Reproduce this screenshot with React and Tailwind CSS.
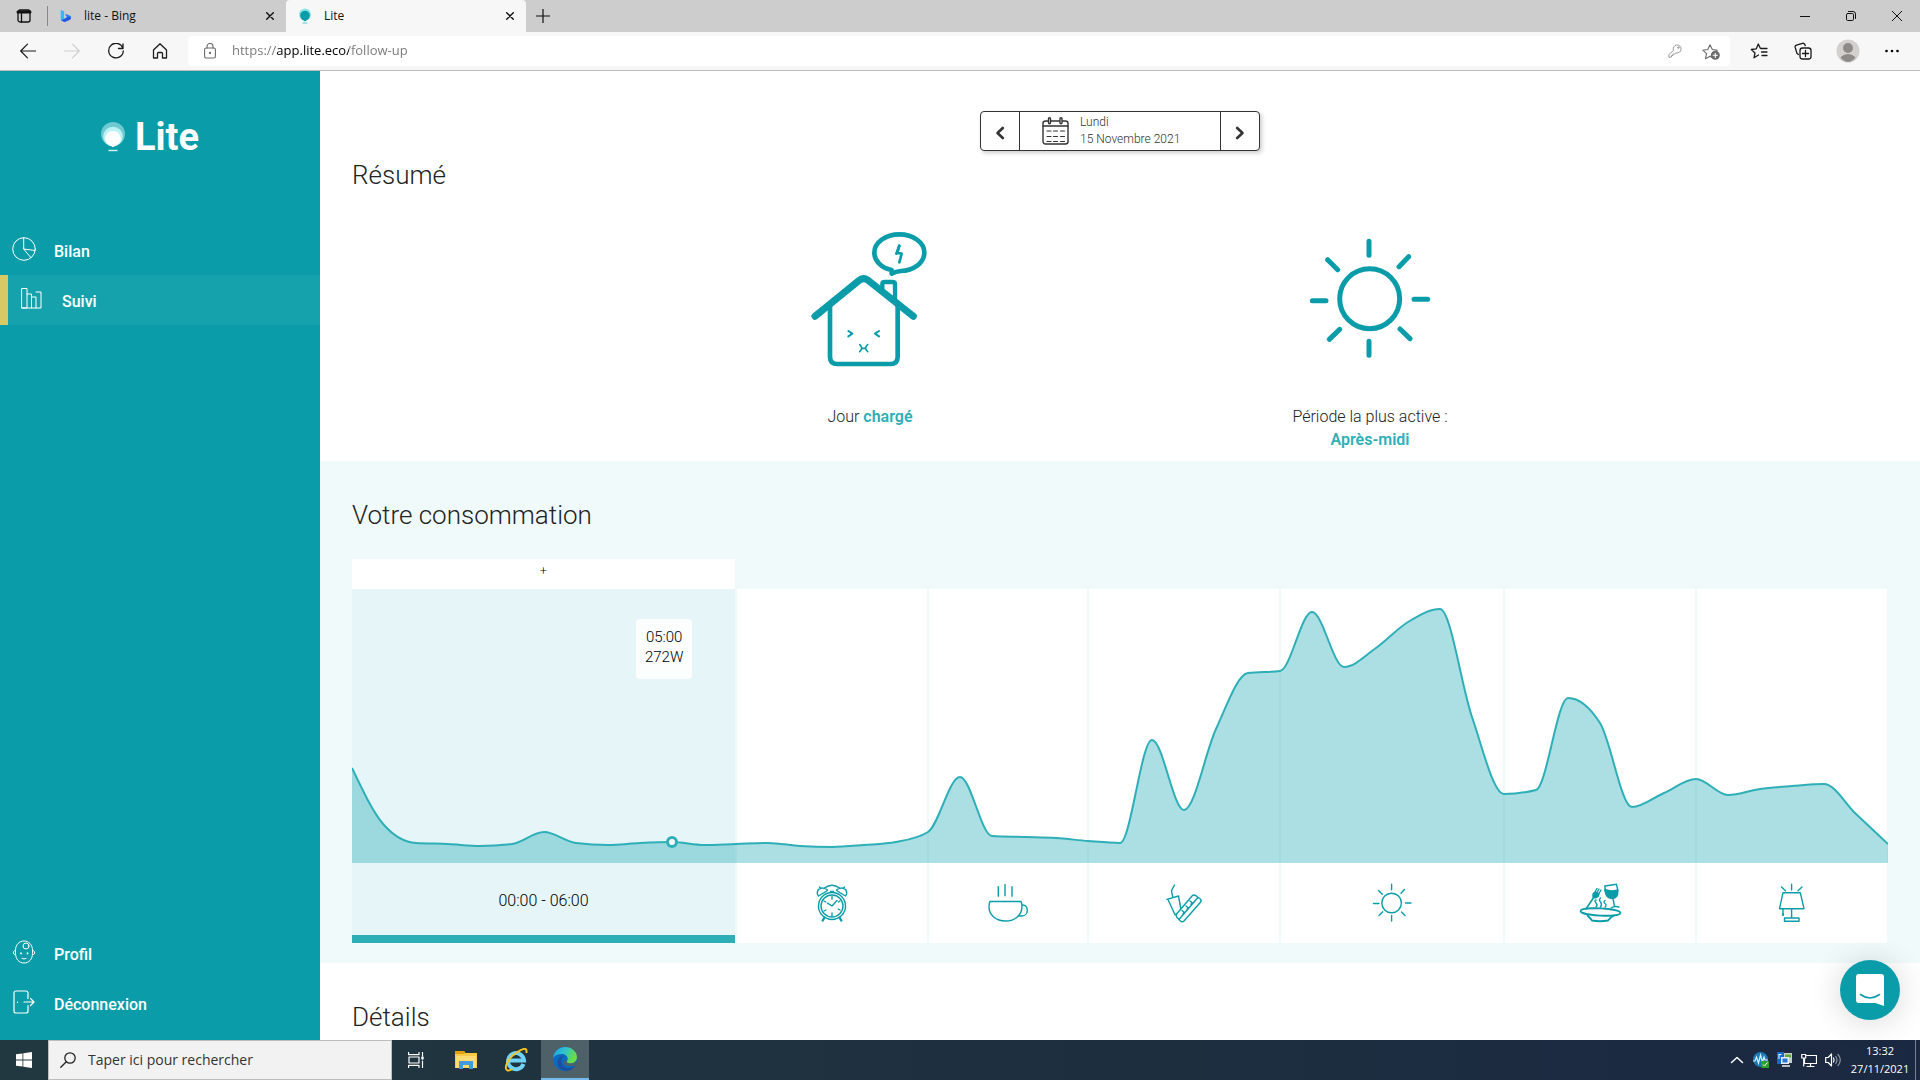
import React from "react";

const TEAL = "#0a9da9";

/* ---------- Browser chrome ---------- */

function Svg({ children, className = "h-4 w-4", box = "0 0 16 16", width = 1 }) {
  return (
    <svg viewBox={box} className={`shrink-0 ${className}`} fill="none" stroke="currentColor" strokeWidth={width} strokeLinecap="round" strokeLinejoin="round" aria-hidden="true">
      {children}
    </svg>
  );
}

function CloseGlyph() {
  return (
    <Svg className="h-2 w-2" box="0 0 8 8" width={1.4}>
      <path d="M.7.7l6.6 6.6M7.3.7L.7 7.3" />
    </Svg>
  );
}

function TabBar() {
  return (
    <div className="flex h-8 items-center bg-[#cdcdcd] text-xs text-[#111]">
      <button aria-label="Menu des onglets" className="ml-4 flex w-4 justify-center">
        <Svg width={1.3}>
          <rect x="2" y="2" width="12" height="12" rx="2" />
          <path d="M2 4h12" strokeWidth="3" />
          <path d="M5.5 4v10" />
        </Svg>
      </button>
      <span className="ml-[15px] h-5 w-px bg-[#888]" />
      <div className="flex h-8 w-[238px] items-center pl-3 pr-3">
        <svg viewBox="0 0 16 16" className="h-4 w-3 shrink-0" aria-hidden="true">
          <path d="M1 0l4.500 1.600v10.400L2.500 13.800 1 13z" fill="#35b6f5" />
          <path d="M7 5l7.500 3q1 3-1 5L6 16l-4.500-2.500 4-1.500 4.200-2.800L8 8.200z" fill="#2f7df0" />
          <path d="M1.500 13.500l4-1.500 5.500-3 3 .5q.5 2-1 3.500L6 16z" fill="#2456e0" />
        </svg>
        <button className="ml-3 flex-1 text-left">lite - Bing</button>
        <button aria-label="Fermer l'onglet Bing"><CloseGlyph /></button>
      </div>
      <div className="flex h-8 w-60 items-center rounded-t bg-[#f7f7f7] pl-3 pr-3">
        <svg viewBox="0 0 14 16" className="h-4 w-3.5 shrink-0" aria-hidden="true">
          <circle cx="7" cy="6.5" r="6" fill="#8ee6e4" />
          <circle cx="7" cy="7.5" r="4.8" fill={TEAL} />
          <path d="M3 10.5L7 13.6l4-3.1z" fill={TEAL} />
          <path d="M4.5 15h5" stroke="#5cc9cc" />
        </svg>
        <button className="ml-3 flex-1 text-left">Lite</button>
        <button aria-label="Fermer l'onglet Lite"><CloseGlyph /></button>
      </div>
      <button aria-label="Nouvel onglet" className="ml-2.5">
        <Svg className="h-3.5 w-3.5" box="0 0 14 14" width={1.2}><path d="M7 0v14M0 7h14" /></Svg>
      </button>
      <div className="ml-auto flex items-center gap-9 pr-4">
        <button aria-label="Réduire">
          <Svg className="h-2.5 w-2.5" box="0 0 10 10"><path d="M0 5.5h10" /></Svg>
        </button>
        <button aria-label="Restaurer">
          <Svg className="h-2.5 w-2.5" box="0 0 10 10">
            <rect x=".5" y="2.5" width="7" height="7" rx="1.2" />
            <path d="M2.5.5H7A2.5 2.5 0 0 1 9.500 3v4.500" />
          </Svg>
        </button>
        <button aria-label="Fermer la fenêtre" className="mr-0.5">
          <Svg className="h-2.5 w-2.5" box="0 0 10 10"><path d="M.3.3l9.400 9.400M9.700.3L.3 9.700" /></Svg>
        </button>
      </div>
    </div>
  );
}

function Toolbar() {
  return (
    <div className="flex h-[39px] items-center border-b border-[#bdbdbd] bg-[#f7f7f7] text-[#1b1b1b]">
      <div className="flex w-[188px] items-center gap-7 pl-5">
        <button aria-label="Retour"><Svg width={1.2}><path d="M15.500 8H.7M7.500 1.200L.7 8l6.800 6.800" /></Svg></button>
        <button aria-label="Avancer" disabled className="text-[#cfcfcf]"><Svg width={1.2}><path d="M.5 8h14.800M8.500 1.200L15.300 8l-6.800 6.800" /></Svg></button>
        <button aria-label="Actualiser"><Svg width={1.3}><path d="M15 5.500A7.300 7.300 0 1 0 15.300 8M15 1v4.500h-4.500" /></Svg></button>
        <button aria-label="Accueil"><Svg width={1.3}><path d="M1.500 7L8 .8 14.500 7v8h-4v-4.500a1 1 0 0 0-1-1h-3a1 1 0 0 0-1 1V15h-4z" /></Svg></button>
      </div>
      <div className="flex h-[30px] flex-1 items-center rounded bg-white pl-4 pr-2.5 text-[#6b6b6b]">
        <button aria-label="Informations sur le site">
          <Svg className="h-4 w-3" box="0 0 12 16" width={1.1}>
            <rect x=".6" y="5" width="10.800" height="10" rx="1.500" />
            <path d="M3 5V3.500a3 3 0 0 1 6 0V5" />
            <circle cx="6" cy="10" r=".6" fill="currentColor" />
          </Svg>
        </button>
        <input
          aria-label="Adresse"
          defaultValue="https://app.lite.eco/follow-up"
          className="ml-4 min-w-0 flex-1 bg-[linear-gradient(90deg,#767676_45px,#000_45px,#000_117px,#767676_117px)] bg-clip-text text-[13px] text-transparent outline-none"
        />
        <button aria-label="Mots de passe" className="text-[#999]">
          <Svg className="h-3.5 w-3.5" box="0 0 14 14">
            <path d="M5.300 6.200A4 4 0 1 1 8 8.800L6.500 10H5v1.500H3.500V13L1 13.300.8 11z" />
            <circle cx="10.300" cy="3.700" r=".7" />
          </Svg>
        </button>
        <button aria-label="Ajouter aux favoris" className="ml-5">
          <Svg className="h-[18px] w-[18px]" box="0 0 18 18" width={1.1}>
            <path d="M10 15.500l-2-1.200-4.500 2.400 1-5L.8 8.200l5-.7L8 2.800l2.300 4.700 5 .7-1.500 1.500" />
            <circle cx="13.300" cy="13.300" r="4.500" fill="currentColor" stroke="none" />
            <path d="M13.300 11.200v4.200M11.200 13.300h4.200" stroke="#fff" />
          </Svg>
        </button>
      </div>
      <div className="flex items-center gap-6 pl-5 pr-5">
        <button aria-label="Favoris">
          <Svg className="h-[18px] w-[18px]" box="0 0 18 18" width={1.3}>
            <path d="M8.500 13L4 15.800l1-4.800L1.300 7.500l4.900-.6L8.300 2l2 4.300M11 6.500h6M11.500 10H17M12 13.500h5" />
          </Svg>
        </button>
        <button aria-label="Collections" className="ml-0.5">
          <Svg className="h-[18px] w-[18px]" box="0 0 18 18" width={1.3}>
            <path d="M4.500 12.500L3 11.500 1.200 5.500a2 2 0 0 1 1.300-2.400L8.500 1.300a2 2 0 0 1 2.300 1.200l.5 1.200" />
            <rect x="6" y="6" width="11" height="11" rx="2.500" />
            <path d="M11.500 8.500v6M8.500 11.500h6" />
          </Svg>
        </button>
        <button aria-label="Compte">
          <svg viewBox="0 0 24 24" className="h-6 w-6" aria-hidden="true">
            <circle cx="12" cy="12" r="11.500" fill="#d3d1ce" />
            <circle cx="12" cy="9" r="5" fill="#8d8a87" />
            <path d="M4.500 18.500q3-3.500 7.500-3.500t7.500 3.500A11 11 0 0 1 12 23a11 11 0 0 1-7.500-4.500z" fill="#8d8a87" />
          </svg>
        </button>
        <button aria-label="Paramètres">
          <svg viewBox="0 0 16 16" className="h-4 w-4" aria-hidden="true"><circle cx="2.500" cy="8" r="1.300" /><circle cx="8" cy="8" r="1.300" /><circle cx="13.500" cy="8" r="1.300" /></svg>
        </button>
      </div>
    </div>
  );
}

/* ---------- Sidebar ---------- */

const PieIcon = () => (
  <Svg className="h-6 w-6" box="0 0 24 24">
    <circle cx="12" cy="12" r="11.300" /><path d="M11.700.7V12l11.300 1.500M11.700 12l7 8.500" />
  </Svg>
);
const BarsIcon = () => (
  <Svg className="h-6 w-6" box="0 0 24 24">
    <path d="M2 1.500h5v19.500H2zM7 7h4.500v14M11.500 10H16v11M16 5h5v16H2" />
  </Svg>
);
const FaceIcon = () => (
  <Svg className="h-6 w-6" box="0 0 24 24">
    <path d="M3.500 10C3.500 4.500 7.500 1 12 1s8.500 3.500 8.500 9.500v3C20.500 19 17 23 12 23s-8.500-4-8.500-9.500z" />
    <path d="M3.500 10.500c-3-.5-3 5 0 4M20.500 10.500c3-.5 3 5 0 4M10 18.500q2 1.300 4 0" />
    <circle cx="14" cy="6" r="3" />
    <path d="M9 13v.8M15.500 13v.8" strokeWidth="1.600" />
  </Svg>
);
const DoorIcon = () => (
  <Svg className="h-6 w-6" box="0 0 24 24" width={1.2}>
    <path d="M16 8.500V3a2 2 0 0 0-2-2H4a2 2 0 0 0-2 2v18a2 2 0 0 0 2 2h10a2 2 0 0 0 2-2v-5.500M12 12h9.500M18.500 8.500L22 12l-3.500 3.500M5.500 12v.5" />
  </Svg>
);

function NavItem({ Icon, label, active }) {
  return (
    <a
      href="#"
      aria-current={active ? "page" : undefined}
      className={`flex h-[50px] items-center pl-3 font-medium text-white ${active ? "border-l-8 border-[#d9c965] bg-white/5" : ""}`}
    >
      <span className="pb-0.5"><Icon /></span>
      <span className="ml-[18px] pt-1">{label}</span>
    </a>
  );
}

function Sidebar() {
  return (
    <aside className="flex w-80 shrink-0 flex-col bg-[#0a9da9] pb-3">
      <div className="flex items-center pl-[101px] pt-[42px]">
        <svg viewBox="0 0 24 30" className="h-[30px] w-6" aria-hidden="true">
          <circle cx="12" cy="12" r="12" fill="#6fc9d0" />
          <circle cx="12" cy="14.500" r="9.800" fill="#b9f3f3" />
          <path d="M12 9a7.600 7.600 0 0 1 5.800 12.600L12 25.300l-5.800-3.700A7.600 7.600 0 0 1 12 9z" fill="#fff" />
          <path d="M7.500 28.500h9" stroke="#d8f7f8" strokeWidth="1.400" />
        </svg>
        <span className="ml-2.5 text-[38px] font-bold leading-[48px] text-white">Lite</span>
      </div>
      <nav className="mt-16" aria-label="Principal">
        <NavItem Icon={PieIcon} label="Bilan" />
        <NavItem Icon={BarsIcon} label="Suivi" active />
      </nav>
      <nav className="mt-auto" aria-label="Compte">
        <NavItem Icon={FaceIcon} label="Profil" />
        <NavItem Icon={DoorIcon} label="Déconnexion" />
      </nav>
    </aside>
  );
}

/* ---------- Summary ---------- */

function DatePicker() {
  return (
    <div className="mx-auto flex h-10 w-[280px] rounded border border-[#333] bg-white text-[#333] shadow-[2px_2px_4px_rgba(0,0,0,0.2)]">
      <button aria-label="Jour précédent" className="flex w-[39px] items-center justify-center border-r border-[#333] pt-1">
        <Svg className="h-3.5 w-2.5" box="0 0 10 14" width={2.6}><path d="M7.800 2L2.500 7l5.300 5" /></Svg>
      </button>
      <button className="flex flex-1 items-center pl-[22px] text-left text-xs leading-[17px] font-light">
        <Svg className="h-7 w-7" box="0 0 28 28" width={1.4}>
          <rect x="1" y="4" width="25" height="23" rx="2.500" />
          <path d="M1 9h25" />
          <rect x="6.500" y=".8" width="2" height="6" rx="1" fill="#fff" />
          <rect x="18" y=".8" width="2" height="6" rx="1" fill="#fff" />
          <path d="M5 14h4M11.500 14h4M18.500 14h4M5 19.500h4M11.500 19.500h4M18.500 19.500h4M5 24.500h4M11.500 24.500h4M18.500 24.500h4" strokeWidth="1.200" />
        </Svg>
        <span className="ml-2.5"><span className="block">Lundi</span><span className="block">15 Novembre 2021</span></span>
      </button>
      <button aria-label="Jour suivant" className="flex w-[39px] items-center justify-center border-l border-[#333] pt-1">
        <Svg className="h-3.5 w-2.5" box="0 0 10 14" width={2.6}><path d="M2.200 2l5.300 5-5.300 5" /></Svg>
      </button>
    </div>
  );
}

function HouseArt() {
  return (
    <svg viewBox="90 60 360 420" className="h-[140px] w-[120px]" fill="none" stroke={TEAL} strokeLinecap="round" strokeLinejoin="round" aria-hidden="true">
      <path d="M150 288V440q0 22 22 22H331q22 0 22-22V288" strokeWidth="14" />
      <path d="M307 240V222q0-6 8-6h22q8 0 8 6v55" strokeWidth="13" strokeLinecap="butt" />
      <path d="M105 319L238 211q13-10 26 0L400 319" strokeWidth="21" />
      <path d="M335 180C304 175 283 152 283 128c0-31 34-55 75-55s75 24 75 55-34 55-70 55q-16 1-28 8z" strokeWidth="14" />
      <path d="M358 107L352 129 365 131 358 157" strokeWidth="8" />
      <path d="M349 131L358 107" strokeWidth="8" />
      <path d="M205 363l12 8-12 8M297 363l-12 8 12 8" strokeWidth="6" />
      <path d="M239 404q12 11 0 21M263 404q-12 11 0 21M245 415h12" strokeWidth="5" />
    </svg>
  );
}

function SunArt() {
  return (
    <svg viewBox="119 60 360 420" className="h-[140px] w-[120px] overflow-visible" fill="none" stroke={TEAL} strokeWidth="15" strokeLinecap="round" aria-hidden="true">
      <circle cx="298" cy="266" r="90" />
      <path d="M296 94v42M296 394v42M126 272h41M431 268h41M172 149l30 30M415 140l-29 30M177 388l31-30M389 357l30 29" />
    </svg>
  );
}

function Summary() {
  return (
    <section className="px-8 pb-2.5 pt-10">
      <DatePicker />
      <h2 className="mt-2 text-[26px] font-light leading-8">Résumé</h2>
      <div className="mx-auto mt-[39px] grid max-w-[1000px] grid-cols-2 text-center leading-[23px] font-light">
        <div className="flex flex-col items-center">
          <HouseArt />
          <p className="mt-[35px]">Jour <strong className="font-semibold text-[#2eafb8]">chargé</strong></p>
        </div>
        <div className="flex flex-col items-center">
          <SunArt />
          <p className="mt-[35px]">Période la plus active :<br /><strong className="font-semibold text-[#2eafb8]">Après-midi</strong></p>
        </div>
      </div>
    </section>
  );
}

/* ---------- Consumption chart ---------- */

const CHART_H = 274;
const STEP = 32;
const LEVELS = [
  179, 236, 254, 255, 257, 255, 243, 254, 256, 254, 253, 256, 255, 254, 257, 258, 256, 253, 243, 188, 247, 248, 249,
  252, 254, 151, 221, 140, 84, 82, 23, 78, 59, 33, 20, 128, 205, 201, 109, 134, 218, 204, 190, 206, 200, 197, 195, 225, 255,
];

/* Monotone cubic interpolation through evenly spaced samples. */
function monotonePath(ys) {
  const n = ys.length;
  const slope = (i) => (ys[i + 1] - ys[i]) / STEP;
  const m = ys.map((_, i) => {
    if (i === 0 || i === n - 1) return 0;
    const a = slope(i - 1);
    const b = slope(i);
    return (Math.sign(a) + Math.sign(b)) * Math.min(Math.abs(a), Math.abs(b), 0.25 * Math.abs(a + b));
  });
  m[0] = (3 * slope(0) - m[1]) / 2;
  m[n - 1] = (3 * slope(n - 2) - m[n - 2]) / 2;
  let d = `M0 ${ys[0]}`;
  for (let i = 1; i < n; i++) {
    const x0 = (i - 1) * STEP;
    const x1 = i * STEP;
    const k = STEP / 3;
    d += `C${x0 + k} ${ys[i - 1] + k * m[i - 1]} ${x1 - k} ${ys[i] - k * m[i]} ${x1} ${ys[i]}`;
  }
  return d;
}
const LINE = monotonePath(LEVELS);

function PeriodSvg({ children }) {
  return <Svg className="h-10 w-10 overflow-visible" box="0 0 40 40" width={1.4}>{children}</Svg>;
}
const AlarmIcon = () => (
  <PeriodSvg>
    <circle cx="20" cy="23" r="13.500" /><circle cx="20" cy="23" r="11" />
    <path d="M20 23l-4.500-2.800M20 23l5-5.500M20 13.500v2.500M20 30v2.500M12 18l1.800 1M28 27l-1.800-1M12 28l1.800-1M28 18l-1.500 1" />
    <path d="M6.500 13Q4 10 6.500 6.500 10 3.500 15 6.500q.8 1-1 2zM33.500 13Q36 10 33.500 6.500 30 3.500 25 6.500q-.8 1 1 2zM12.500 5Q20-.5 27.500 5M7.500 4l1.200 1.500M32.500 4l-1.200 1.500M18.500 8.500h3" />
    <path d="M12.500 34.500l-1.800 3M27.500 34.500l1.800 3" strokeWidth="2.400" />
  </PeriodSvg>
);
const CupIcon = () => (
  <PeriodSvg>
    <path d="M2 18.500h31q1 1.500 1 5C34 32 27 38 17.500 38S1 32 1 24q0-4 1-5.500z" />
    <path d="M34 22c7-1 7 11 0 11h-3M10.300 3.700v9.600M17 1.500v11.300M24 3.700v9.600" />
  </PeriodSvg>
);
const SnackIcon = () => (
  <PeriodSvg>
    <path d="M10.500 2L7.500 7.700l1.300 7M3 16.300L14.500 13l2.300 12.500M4 16.500l7 15.200 1.500-.7" />
    <path d="M12.500 34q-1-2 .5-3.500L28 13q1.500-2 4-.3l4 3q2 1.500.5 3.500L20 38q-1.800 1.500-3.500 0zM15 36.500L33.500 15M18 27.500l2 1.500-1 2M22 23l2 1.500-1 2M26 18l2 1.500-1 2" />
  </PeriodSvg>
);
const NoonIcon = () => (
  <PeriodSvg>
    <circle cx="19.600" cy="20" r="9.800" />
    <path d="M19.600 1.300v5.500M19.600 32.500v5.500M1.500 20.500H7M33.500 20H39M6.500 7.500l3.800 3.800M32.500 6.500l-3.500 3.800M7 32.500l3.800-3.800M29.500 29l3.500 3.500" />
  </PeriodSvg>
);
const DinnerIcon = () => (
  <PeriodSvg>
    <ellipse cx="20.500" cy="29" rx="20" ry="3.600" transform="rotate(3 20.500 29)" strokeWidth="1.800" />
    <path d="M7.500 32.500q3 3 4.500 5 8 1.500 16 0 2-3 6-5" strokeWidth="1.800" />
    <path d="M6 26l9-13.500" strokeWidth="1.600" />
    <path d="M13 11l2-2 4 2-1 2.500q-3 2.500-5 .5zM15 9l2-3.500M17 9.500l2-3.500M19 10.500l2-3.500" fill="currentColor" />
    <path d="M25 3l11.500-1.700L38 8" /><path d="M25 6.500q6 2.500 12.500.5 1.500 8-5.500 8.500-6.500 0-7-9z" fill="currentColor" />
    <path d="M25 3v5M33 15.500l1.500 8M31 25q4-2.500 8-1M16 24q2-2 0-4t0-3M20.500 24q2-3 0-5t0-4M25 24q2-2 0-3.500t0-3" />
  </PeriodSvg>
);
const LampIcon = () => (
  <PeriodSvg>
    <path d="M11 9.700h17.300L32 25.700H7.500zM19.600 25.700V35M12.500 35h14.500v3.300H12.500zM11 26v4M19.600 1.300V7M9.500 4l4 3.700M30 4l-4 3.700" />
    <path d="M11 31v1" strokeWidth="2.200" />
  </PeriodSvg>
);

const PERIODS = [
  ["Réveil", AlarmIcon], ["Matinée", CupIcon], ["Midi", SnackIcon],
  ["Après-midi", NoonIcon], ["Dîner", DinnerIcon], ["Soirée", LampIcon],
];

function Consumption() {
  return (
    <section className="bg-[#f1fafb] px-8 pb-5 pt-[38px]">
      <h2 className="text-[26px] font-light leading-8">Votre consommation</h2>
      <div className="mt-7 grid grid-cols-[12fr_36fr]">
        <button className="h-[30px] border-r border-[#f1fafb] bg-white pb-1.5 text-xs font-light text-black">+</button>
      </div>
      <div className="relative">
        <div className="grid grid-cols-[12fr_6fr_5fr_6fr_7fr_6fr_6fr]">
          <button className="border-r border-[#f1fafb] bg-[#e5f5f8] font-light text-black">
            <span className="block h-[274px]" />
            <span className="flex h-20 items-center justify-center border-b-8 border-[#2eafb8] pt-1">00:00 - 06:00</span>
          </button>
          {PERIODS.map(([label, Icon]) => (
            <button key={label} aria-label={label} className="border-x border-[#f1fafb] bg-white">
              <span className="block h-[274px]" />
              <span className="flex h-20 items-center justify-center text-[#0a9da9]"><Icon /></span>
            </button>
          ))}
        </div>
        <svg viewBox={`0 0 1536 ${CHART_H}`} preserveAspectRatio="none" className="pointer-events-none absolute inset-x-0 top-0 h-[274px] w-full" role="img" aria-label="Consommation sur la journée">
          <path d={`${LINE}V${CHART_H}H0Z`} fill="#2eafb8" fillOpacity="0.4" />
          <path d={LINE} fill="none" stroke="#2eafb8" strokeWidth="2" vectorEffect="non-scaling-stroke" />
        </svg>
        <span className="absolute left-[20.833%] top-[253px] h-3 w-3 -translate-x-1/2 -translate-y-1/2 rounded-full border-3 border-[#2eafb8] bg-white" />
        <div className="absolute left-[18.5%] top-[30px] h-[60px] w-14 rounded bg-white/90 pt-2 text-center text-[15px] font-light leading-5 text-black">
          <div>05:00</div>
          <div>272W</div>
        </div>
      </div>
    </section>
  );
}

/* ---------- Taskbar ---------- */

function Taskbar() {
  return (
    <footer className="flex h-10 shrink-0 items-center bg-linear-to-r from-[#213840] via-[#1e303f] to-[#1b2841] text-white">
      <button aria-label="Démarrer" className="flex w-12 justify-center">
        <svg viewBox="0 0 16 16" className="h-4 w-4" fill="#fff" aria-hidden="true">
          <path d="M0 2.300L6.500 1.400v6.200H0zM7.300 1.300L16 0v7.600H7.300zM0 8.400h6.500v6.200L0 13.700zM7.300 8.400H16V16l-8.700-1.300z" />
        </svg>
      </button>
      <label className="flex h-10 w-[344px] items-center border border-[#bdbdbd] bg-[#f2f2f2] pl-[11px] text-[#222]">
        <Svg width={1.3}><circle cx="10" cy="6" r="5.200" /><path d="M6.300 9.700L.8 15.300" /></Svg>
        <input aria-label="Rechercher" placeholder="Taper ici pour rechercher" className="ml-3 w-64 bg-transparent text-sm outline-none placeholder:text-[#333]" />
      </label>
      <button aria-label="Affichage des tâches" className="flex w-12 justify-center">
        <Svg width={1.200}>
          <path d="M.6 .5v2.200h10.400V.5M.6 15.500v-2.200h10.400v2.200M1 5h10v6H1zM14.500.5V4M14.500 9v6.500" />
          <path d="M14.500 5.500v1" strokeWidth="2.400" />
        </Svg>
      </button>
      <button aria-label="Explorateur de fichiers" className="ml-px flex w-[50px] justify-center">
        <svg viewBox="0 0 22 18" className="h-[18px] w-[22px]" aria-hidden="true">
          <path d="M0 0h9l1.500 2H22v15H0z" fill="#fbc94a" /><path d="M0 0h9l1.500 2-1.500 1H0z" fill="#e5a00d" />
          <path d="M1 5h20v12H1z" fill="#ffdc73" /><path d="M4 10h14v8h-4v-4H8v4H4z" fill="#3f9be0" />
        </svg>
      </button>
      <button aria-label="Internet Explorer" className="flex w-[50px] justify-center">
        <svg viewBox="0 0 24 24" className="h-6 w-6" fill="none" aria-hidden="true">
          <path d="M19.500 16A8 8 0 1 1 20 12.500H6" stroke="#6fd3f7" strokeWidth="4" />
          <path d="M3.500 22.500C-1 21 4 10 12 5S23-1 22.500 5M3.500 22.500q2 .5 5-1.500" stroke="#f6c421" strokeWidth="2" />
        </svg>
      </button>
      <button aria-label="Microsoft Edge" className="flex h-10 w-12 items-center justify-center border-b-2 border-[#76b9ed] bg-[#4e6068]">
        <svg viewBox="0 0 24 24" className="h-6 w-6" aria-hidden="true">
          <defs>
            <linearGradient id="edgeTop" x1="0" y1="0" x2="1" y2=".4"><stop offset="0" stopColor="#1b9de2" /><stop offset=".5" stopColor="#2fc3d0" /><stop offset="1" stopColor="#6be03f" /></linearGradient>
          </defs>
          <circle cx="12" cy="12" r="12" fill="#0c6ac0" />
          <path d="M0 11C1 4 6 0 12 0c7 0 12 5 12 10 0 4-3 6.500-6.500 6.500-3 0-4.500-1.300-3.500-2.500 1.500-2 1-6-4-7C6 6.500 2 8 0 11z" fill="url(#edgeTop)" />
          <path d="M8.500 12.500c-1.500 5 3 9.500 8.500 8.500 2-.3 4-1.200 5-2.500-2 4-6 5.500-9.500 5.500C7 23.500 3 18.500 5 13c1-2.500 3-4.500 6-4.500-1.500 1-2 2.500-2.500 4z" fill="#1b4fa0" />
          <path d="M14 14c-1 1.200.5 2.500 3.500 2.500 2.500 0 4.500-1 5.500-2.500l1 1-2 3.500q-7 1.500-11-1-1-2 .5-4z" fill="#4e6068" />
        </svg>
      </button>
      <div className="ml-auto flex items-center gap-2 pr-1">
        <button aria-label="Icônes masquées">
          <Svg width={1.500}><path d="M2.500 10.500L8 5.500l5.500 5" /></Svg>
        </button>
        <svg viewBox="0 0 16 16" className="h-4 w-4" aria-hidden="true">
          <circle cx="7.500" cy="7.500" r="7.500" fill="#1b79b5" />
          <path d="M0 9h2l1.500-4L5.500 11l2-8 2 7L11 5l1 3h3" fill="none" stroke="#d6f2ff" strokeWidth="1.200" />
          <path d="M8.500 9H16v7H8.500z" fill="#2ea32b" /><path d="M10 12.500l1.500 1.500 3-3.500" fill="none" stroke="#fff" />
        </svg>
        <svg viewBox="0 0 16 16" className="h-4 w-4" aria-hidden="true">
          <path d="M6 1h9v10H6z" fill="#c9cfc8" /><path d="M8 2.500h6v3H8z" fill="#5da83f" /><path d="M0 0h7v12H0z" fill="#1669c9" />
          <path d="M4 5h8v7H4z" fill="#e6edf2" /><path d="M5.500 6.500h5v4h-5z" fill="#2377d0" /><path d="M5 13h8v2H5z" fill="#b8bcc0" />
          <path d="M2 2.500h2.500M2 2v5" stroke="#fff" />
        </svg>
        <Svg className="h-4 w-4" width={1.200}><path d="M5.500 3.500h10v8H3.500V7M9.500 11.500V14M6 14.500h7M.7 2.500h4V6h-4zM2.700 6v8" /></Svg>
        <Svg className="h-4 w-4" width={1.200}>
          <path d="M.7 5.500h2.500L6.500 2v12L3.200 10.500H.7zM8.500 6q1.300 2 0 4" />
          <path d="M10.700 4.500q2.500 3.500 0 7M13 2.500q4.500 5.500 0 11" opacity=".5" />
        </Svg>
      </div>
      <div className="w-[70px] text-center text-[11px] leading-[18px]"><div>13:32</div><div>27/11/2021</div></div>
      <span className="mr-1 h-10 w-px bg-[#77808e]" />
    </footer>
  );
}

export default function App() {
  return (
    <div className="flex h-screen flex-col overflow-hidden bg-white font-['Open_Sans',sans-serif]">
      <header>
        <TabBar />
        <Toolbar />
      </header>
      <div className="relative flex min-h-0 flex-1 font-['Roboto',sans-serif] text-base text-[#222]">
        <Sidebar />
        <main className="min-w-0 flex-1 overflow-hidden">
          <Summary />
          <Consumption />
          <section className="px-8 pt-[38px]">
            <h2 className="text-[26px] font-light leading-8">Détails</h2>
          </section>
        </main>
        <button aria-label="Ouvrir la messagerie" className="absolute bottom-5 right-5 flex h-[60px] w-[60px] items-center justify-center rounded-full bg-[#0a9da9] shadow-[0_2px_32px_rgba(0,0,0,0.16)]">
          <svg viewBox="0 0 28 32" className="h-8 w-7" aria-hidden="true">
            <path d="M3 0h22a3 3 0 0 1 3 3v29l-8.500-3H3a3 3 0 0 1-3-3V3a3 3 0 0 1 3-3z" fill="#fff" />
            <path d="M4.500 20.500q9.500 7 19 0" fill="none" stroke={TEAL} strokeWidth="1.600" strokeLinecap="round" />
          </svg>
        </button>
      </div>
      <Taskbar />
    </div>
  );
}
